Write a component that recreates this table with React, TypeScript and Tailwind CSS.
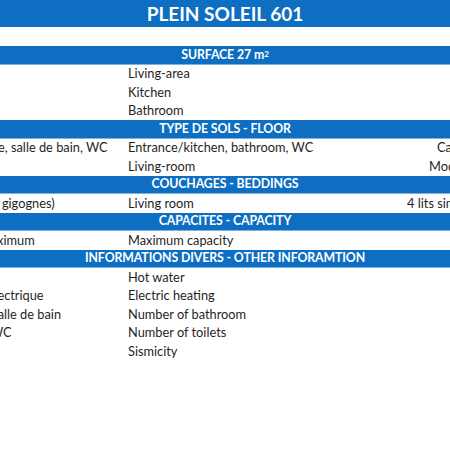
const Band = ({ children }: { children: React.ReactNode }) => (
  <div className="h-[18.5px] bg-[#0e6ec2] border-b border-[#7fb2e2] flex items-center justify-center text-white font-bold text-[12.3px] tracking-[-0.1px] leading-none">
    {children}
  </div>
);

type RowProps = { fr?: string; en: string; extra?: string; extraPad?: string; indent?: string };

const Row = ({ fr, en, extra, extraPad, indent = 'ml-[-76px]' }: RowProps) => (
  <div className="h-[18.5px] grid grid-cols-[128px_1fr] items-center text-[12.8px] leading-none text-[#1f1f1f] whitespace-nowrap">
    <div className="overflow-hidden">
      <span className={`block ${indent}`}>{fr}</span>
    </div>
    <div className="relative flex">
      <span>{en}</span>
      {extra && <span className={`absolute ${extraPad}`}>{extra}</span>}
    </div>
  </div>
);

export default function App() {
  return (
    <div className="w-[450px] h-[450px] bg-white overflow-hidden font-['Lato','Liberation_Sans',sans-serif]">
      <div className="h-[27px] bg-[#0e6ec2] flex items-center justify-center text-white font-bold text-[19px] leading-none">
        PLEIN SOLEIL 601
      </div>
      <div className="h-[19px]" />

      <Band>
        SURFACE 27 m<sup className="text-[8px] relative -top-[1px]">2</sup>
      </Band>
      <Row en="Living-area" />
      <Row en="Kitchen" />
      <Row en="Bathroom" />

      <Band>TYPE DE SOLS - FLOOR</Band>
      <Row fr="Entrée/cuisine, salle de bain, WC" en="Entrance/kitchen, bathroom, WC" extra="Carrelage" extraPad="left-[309px]" />
      <Row fr="Séjour" en="Living-room" extra="Moquette" extraPad="left-[301px]" />

      <Band>COUCHAGES - BEDDINGS</Band>
      <Row fr="Séjour (2 lits gigognes)" en="Living room" extra="4 lits simples" extraPad="left-[279px]" indent="ml-[-70.5px]" />

      <Band>CAPACITES - CAPACITY</Band>
      <Row fr="Capacité maximum" en="Maximum capacity" indent="ml-[-72px]" />

      <Band>INFORMATIONS DIVERS - OTHER INFORAMTION</Band>
      <Row fr="Eau chaude" en="Hot water" />
      <Row fr="Chauffage électrique" en="Electric heating" indent="ml-[-73px]" />
      <Row fr="Nombre de salle de bain" en="Number of bathroom" indent="ml-[-74px]" />
      <Row fr="Nombre de WC" en="Number of toilets" />
      <Row fr="Sismicité" en="Sismicity" />
    </div>
  );
}
